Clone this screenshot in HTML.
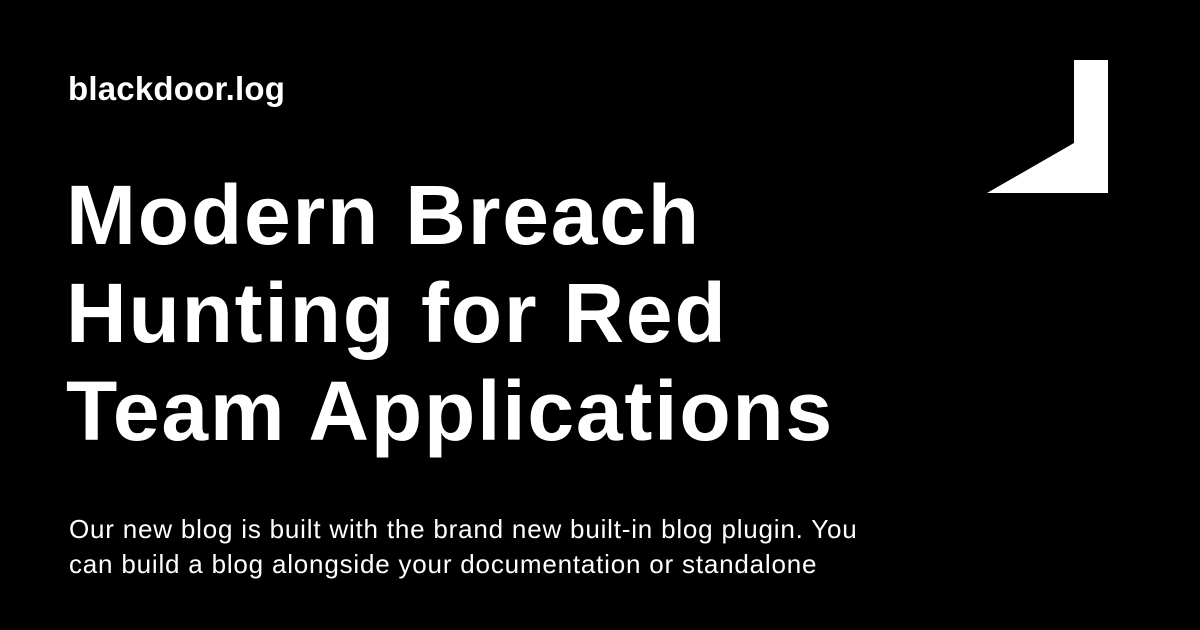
<!DOCTYPE html>
<html><head><style>
body{margin:0;width:1200px;height:630px;background:#000;overflow:hidden;position:relative;font-family:"Liberation Sans",sans-serif;color:#fff}
.site{position:absolute;left:68px;top:70px;font-size:33px;font-weight:bold;letter-spacing:0.2px}
.title{position:absolute;left:66px;top:166px;font-size:84px;font-weight:bold;line-height:98px;letter-spacing:1.8px}
.desc{position:absolute;left:69px;top:512px;font-size:26px;line-height:35px;letter-spacing:0.8px}
svg{position:absolute;left:0;top:0}
</style></head><body>
<div class="site">blackdoor.log</div>
<div class="title">Modern Breach<br>Hunting for Red<br>Team Applications</div>
<div class="desc">Our new blog is built with the brand new built-in blog plugin. You<br>can build a blog alongside your documentation or standalone</div>
<svg width="1200" height="630"><polygon points="1074,60 1108,60 1108,193 987,193 1074,143" fill="#fff"/></svg>
</body></html>
